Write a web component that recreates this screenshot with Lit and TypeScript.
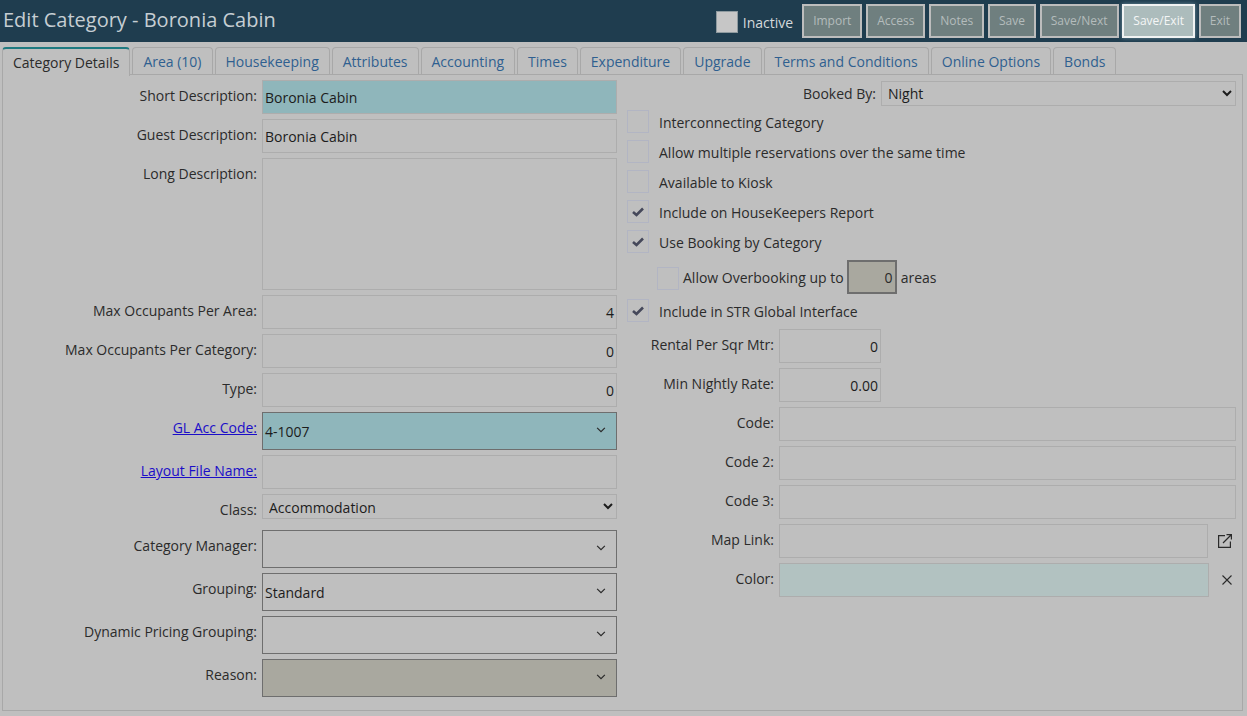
import { LitElement, html, css, svg } from "lit";
import { customElement } from "lit/decorators.js";

const TABS = ["Area (10)", "Housekeeping", "Attributes", "Accounting", "Times", "Expenditure", "Upgrade", "Terms and Conditions", "Online Options", "Bonds"];
const BUTTONS = ["Import", "Access", "Notes", "Save", "Save/Next"];
const CHEVRON = svg`<svg class="chev" width="10" height="6" viewBox="0 0 11 7"><path d="M1 1 L5.5 5.5 L10 1" fill="none" stroke="#2a2a2a" stroke-width="1.4"/></svg>`;
const CHECK = svg`<svg class="tick" width="22" height="23" viewBox="0 0 22 23"><path d="M6 12 L9.5 15 L16 8.5" fill="none" stroke="#45485a" stroke-width="2.6"/></svg>`;

@customElement("app-root")
export class AppRoot extends LitElement {
  static styles = css`
    :host { display: block; height: 716px; overflow: hidden; background: #bfbfbf; color: #2b2b2b; font: 14px/19px "Open Sans", sans-serif; }
    * { box-sizing: border-box; }
    .top { height: 42px; background: #1f3d4f; display: flex; align-items: flex-start; padding: 3px 6px 0 3px; }
    .title { flex: 1; font-size: 20px; line-height: 34px; color: #c6ced3; }
    .inactive { display: flex; align-items: center; gap: 5px; color: #d4d9dc; margin: 8px 9px 0 0; height: 22px; }
    .inactive i { width: 22px; height: 22px; background: #c6c6c6; border: 1px solid #8e9a9f; display: block; }
    .btns { display: flex; gap: 3.8px; margin-top: 0.5px; }
    .btn { height: 34px; padding: 0 9px; border: 2px solid #bdbdbd; background: #6f7f7f; color: #b4bcbc; font-size: 12px; line-height: 29px; }
    .btn.on { background: #acbcbc; color: #f4f6f6; border-color: #f0f2f2; box-shadow: 0 0 4px #6d8c9c; }
    .tabs { display: flex; gap: 2px; padding: 5px 0 0 2px; height: 33px; position: relative; }
    .tab { height: 27px; padding: 0 10px; border: 1px solid #a8a8a8; border-bottom: 0; border-radius: 4px 4px 0 0; color: #2f5f90; line-height: 27px; }
    .tab.on { height: 29px; padding: 4px 10px 0; border-top: 2px solid #1f7a80; color: #2b2b2b; background: #bfbfbf; line-height: 19px; position: relative; z-index: 1; }
    .panel { margin: -1px 4px 0 2px; height: 637px; border: 1px solid #a8a8a8; padding: 5px 6px 0 0; display: flex; gap: 10px; }
    .left { width: 614px; display: flex; flex-direction: column; gap: 5px; }
    .right { flex: 1; display: flex; flex-direction: column; }
    .row { display: flex; gap: 5px; }
    .lbl { flex: none; text-align: right; padding-top: 6px; }
    .left .lbl { width: 254px; }
    .fields .lbl { width: 147px; }
    .field { flex: 1; min-width: 0; height: 34px; border: 1px solid #adadad; background: transparent; padding: 2px 2px 0; line-height: 30px; color: #1c1c1c; display: flex; align-items: center; justify-content: space-between; }
    .num { justify-content: flex-end; }
    .teal { background: #8fb6bb; }
    .tall { height: 132px; }
    .combo { height: 38px; border-color: #6e6e6e; padding-right: 10px; }
    .chev { margin-bottom: 4px; }
    .grey { background: #a9a89f; }
    .swatch { background: #b2c2c1; }
    select { flex: 1; min-width: 0; height: 25px; border: 1px solid #adadad; background: transparent; color: #1c1c1c; font: 14px "Open Sans", sans-serif; padding: 0 2px; }
    .cls { padding-top: 1px; }
    .gapped { margin-top: 6px; }
    .booked { margin-top: 1px; }
    .booked .lbl { width: 249px; padding-top: 3px; }
    .checks { display: flex; flex-direction: column; gap: 7px; margin-top: 4px; }
    .chk { display: flex; align-items: center; gap: 10px; height: 23px; }
    .chk .txt { padding-top: 2px; }
    .box { flex: none; width: 22px; height: 23px; border: 1px solid #b2b5c3; position: relative; }
    .tick { position: absolute; left: -1px; top: -1px; }
    .over { display: flex; align-items: center; height: 34px; margin: 7px 0 5px 30px; }
    .over .box { margin: 3px 4px 0 0; }
    .over .amt { width: 50px; height: 34px; margin: 0 4px 0 3px; border: 2px solid #6e6e6e; background: #a9a89f; display: flex; align-items: center; justify-content: flex-end; padding-right: 2px; }
    .fields { display: flex; flex-direction: column; gap: 5px; margin-top: 7px; }
    .short { flex: none; width: 102px; }
    .side { flex: none; width: 23px; display: flex; align-items: center; justify-content: flex-end; padding-right: 4px; }
    .side.x { width: 22px; }
    a { color: #1a0dc8; text-decoration: underline; }
  `;

  private check(label: string, on = false) {
    return html`<div class="chk"><span class="box">${on ? CHECK : ""}</span><span class="txt">${label}</span></div>`;
  }

  private row(label: unknown, cls: string, value = "", chev = false) {
    return html`<div class="row"><span class="lbl">${label}</span><div class="field ${cls}"><span>${value}</span>${chev ? CHEVRON : ""}</div></div>`;
  }

  render() {
    return html`
      <div class="top">
        <div class="title">Edit Category - Boronia Cabin</div>
        <div class="inactive"><i></i><span>Inactive</span></div>
        <div class="btns">
          ${BUTTONS.map((b) => html`<div class="btn">${b}</div>`)}
          <div class="btn on">Save/Exit</div>
          <div class="btn">Exit</div>
        </div>
      </div>
      <div class="tabs">
        <div class="tab on">Category Details</div>
        ${TABS.map((t) => html`<div class="tab">${t}</div>`)}
      </div>
      <div class="panel">
        <div class="left">
          ${this.row("Short Description:", "teal", "Boronia Cabin")}
          ${this.row("Guest Description:", "", "Boronia Cabin")}
          ${this.row("Long Description:", "tall")}
          ${this.row("Max Occupants Per Area:", "num", "4")}
          ${this.row("Max Occupants Per Category:", "num", "0")}
          ${this.row("Type:", "num", "0")}
          ${this.row(html`<a href="#">GL Acc Code:</a>`, "combo teal", "4-1007", true)}
          ${this.row(html`<a href="#">Layout File Name:</a>`, "")}
          <div class="row"><span class="lbl">Class:</span><select class="cls"><option>Accommodation</option></select></div>
          <div class="gapped">${this.row("Category Manager:", "combo", "", true)}</div>
          ${this.row("Grouping:", "combo", "Standard", true)}
          ${this.row("Dynamic Pricing Grouping:", "combo", "", true)}
          ${this.row("Reason:", "combo grey", "", true)}
        </div>
        <div class="right">
          <div class="row booked"><span class="lbl">Booked By:</span><select><option>Night</option></select></div>
          <div class="checks">
            ${this.check("Interconnecting Category")}
            ${this.check("Allow multiple reservations over the same time")}
            ${this.check("Available to Kiosk")}
            ${this.check("Include on HouseKeepers Report", true)}
            ${this.check("Use Booking by Category", true)}
          </div>
          <div class="over"><span class="box"></span><span>Allow Overbooking up to</span><span class="amt">0</span><span>areas</span></div>
          ${this.check("Include in STR Global Interface", true)}
          <div class="fields">
            <div class="row"><span class="lbl">Rental Per Sqr Mtr:</span><div class="field num short">0</div></div>
            <div class="row"><span class="lbl">Min Nightly Rate:</span><div class="field num short">0.00</div></div>
            ${this.row("Code:", "")}
            ${this.row("Code 2:", "")}
            ${this.row("Code 3:", "")}
            <div class="row"><span class="lbl">Map Link:</span><div class="field"></div>
              <span class="side"><svg width="14" height="14" viewBox="0 0 14 14" fill="none" stroke="#2a2a2a" stroke-width="1.2"><path d="M7 1.6 H0.6 V13.4 H12.4 V7.5"/><path d="M5 9 L13 1 M8.5 0.6 H13.4 V5.5"/></svg></span>
            </div>
            <div class="row"><span class="lbl">Color:</span><div class="field swatch"></div>
              <span class="side x"><svg width="10" height="10" viewBox="0 0 10 10" fill="none" stroke="#2a2a2a" stroke-width="1.1"><path d="M0.5 0.5 L9.5 9.5 M9.5 0.5 L0.5 9.5"/></svg></span>
            </div>
          </div>
        </div>
      </div>
    `;
  }
}
